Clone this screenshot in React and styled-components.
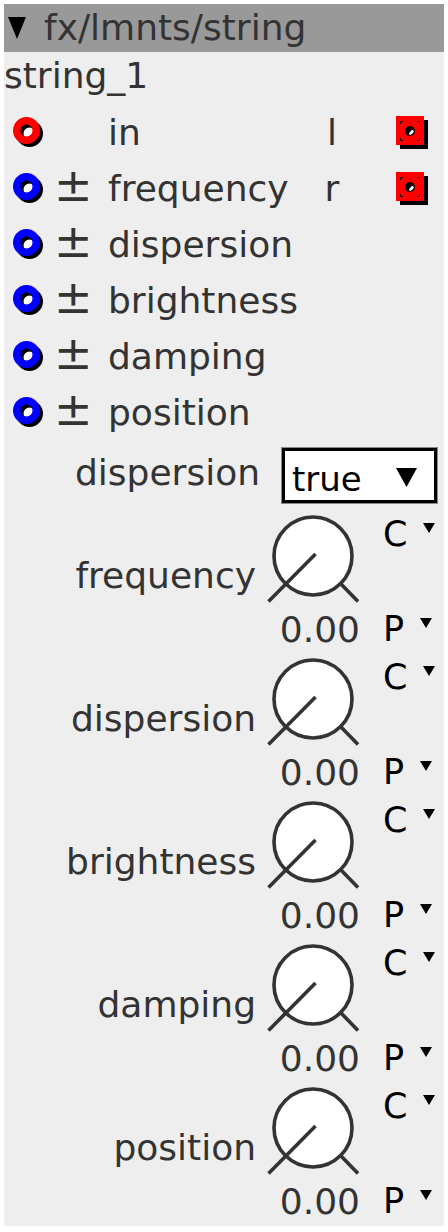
import React from "react";
import styled, { createGlobalStyle } from "styled-components";

const Global = createGlobalStyle`
  body {
    margin: 0;
    background: #fff;
  }
`;

const Panel = styled.div`
  margin: 4px;
  width: 440px;
  background: #eee;
  font-family: "DejaVu Sans", "Noto Sans", sans-serif;
  font-size: 36px;
  color: #333;
  padding-bottom: 4px;
`;

const Header = styled.div`
  height: 48px;
  line-height: 48px;
  background: #999;
  display: flex;
  align-items: center;
  padding-left: 4px;
  white-space: nowrap;
`;

const HeaderCaret = styled.svg`
  width: 18px;
  height: 22px;
  margin-right: 18px;
  flex: none;
`;

const Name = styled.div`
  height: 53px;
  line-height: 48px;
`;

const PortRow = styled.div`
  display: grid;
  grid-template-columns: 45px 50px 192px 64px 1fr;
  align-items: center;
  height: 56px;
  line-height: 56px;
  padding-left: 9px;
`;

const Sign = styled.span`
  margin-left: -4px;
  font-size: 46px;
  line-height: 49px;
  padding-bottom: 7px;
`;

const OutLabel = styled.span`
  text-align: center;
`;

const OutCell = styled.div`
  display: flex;
  align-items: center;
  padding-left: 32px;
`;

const Jack = styled.svg`
  display: block;
  width: 32px;
  height: 32px;
`;

const OutJackSvg = styled.svg`
  display: block;
  width: 33px;
  height: 34px;
`;

const SelectRow = styled.div`
  display: grid;
  grid-template-columns: 262px 1fr;
  height: 55px;
  margin-top: 7px;
`;

const Label = styled.div`
  text-align: right;
  padding-right: ${(p) => p.right || 8}px;
  line-height: 41px;
  padding-top: ${(p) => p.top || 0}px;
  white-space: nowrap;
`;

const Select = styled.div`
  margin-left: 16px;
  width: 155px;
  height: 55px;
  box-sizing: border-box;
  background: #fff;
  border: 3px solid #000;
  box-shadow: 0 0 0 1px #888;
  display: flex;
  justify-content: space-between;
  align-items: flex-start;
  padding: 8px 17px 0 7px;
  color: #000;
  font-size: 34px;
  line-height: 41px;
`;

const SelectCaret = styled.svg`
  width: 21px;
  height: 19px;
  margin-top: 9px;
  flex: none;
`;

const Knobs = styled.div`
  display: flex;
  flex-direction: column;
  gap: 7px;
  margin-top: 11px;
`;

const KnobBlock = styled.div`
  display: grid;
  grid-template-columns: 262px 94px 84px;
  grid-template-rows: 95px 41px;
  grid-template-areas:
    "label knob ctl"
    "label value param";
`;

const KnobLabel = styled(Label)`
  grid-area: label;
  padding-top: 41px;
`;

const KnobSvg = styled.svg`
  grid-area: knob;
  display: block;
  width: 94px;
  height: 92px;
`;

const Value = styled.div`
  grid-area: value;
  text-align: right;
  line-height: 41px;
  white-space: nowrap;
`;

const Mode = styled.div`
  grid-area: ${(p) => p.area};
  display: flex;
  align-items: flex-start;
  padding-left: 23px;
  font-size: 35px;
  line-height: 41px;
  color: #000;
`;

const SmallCaret = styled.svg`
  width: 12px;
  height: 10px;
  margin-left: 16px;
  margin-top: 9px;
  flex: none;
`;

const InJack = ({ color }) => (
  <Jack viewBox="0 0 32 32">
    <circle cx="16.5" cy="16.5" r="9.75" fill="#fff" stroke="#000" strokeWidth="7.5" />
    <circle cx="13.5" cy="13.5" r="9.75" fill="none" stroke={color} strokeWidth="7.5" />
  </Jack>
);

const OutJack = () => (
  <OutJackSvg viewBox="0 0 33 34">
    <rect x="4" y="4" width="28" height="29" fill="#000" />
    <rect x="0" y="0" width="28" height="29" fill="#f00" />
    <circle cx="14" cy="15" r="5" fill="#000" />
    <ellipse cx="15.5" cy="16.5" rx="3" ry="1.5" fill="#fff" transform="rotate(-45 15.5 16.5)" />
    <g stroke="#000" strokeWidth="1" fill="none">
      <path d="M4.5 8 V5.5 H7" />
      <path d="M21 5.5 H23.5 V8" />
      <path d="M4.5 22 V24.5 H7" />
      <path d="M21 24.5 H23.5 V22" />
    </g>
  </OutJackSvg>
);

const Caret = ({ as: Comp, w, h }) => (
  <Comp viewBox={`0 0 ${w} ${h}`}>
    <polygon points={`0,0 ${w},0 ${w / 2},${h}`} fill="#000" />
  </Comp>
);

const Knob = () => (
  <KnobSvg viewBox="0 0 94 92">
    <circle cx="47" cy="42" r="39" fill="#fff" stroke="#333" strokeWidth="3.6" />
    <line x1="49.5" y1="40" x2="2.5" y2="87.5" stroke="#333" strokeWidth="3.6" />
    <line x1="74.5" y1="69.5" x2="92" y2="87.5" stroke="#333" strokeWidth="3.6" />
  </KnobSvg>
);

const ports = [
  { name: "in", color: "#f00", sign: false, out: "l" },
  { name: "frequency", color: "#00f", sign: true, out: "r" },
  { name: "dispersion", color: "#00f", sign: true },
  { name: "brightness", color: "#00f", sign: true },
  { name: "damping", color: "#00f", sign: true },
  { name: "position", color: "#00f", sign: true },
];

const knobs = ["frequency", "dispersion", "brightness", "damping", "position"];

const App = () => {
  return (
    <>
      <Global />
      <Panel>
        <Header>
          <Caret as={HeaderCaret} w={18} h={22} />
          fx/lmnts/string
        </Header>
        <Name>string_1</Name>
        {ports.map((p) => (
          <PortRow key={p.name}>
            <InJack color={p.color} />
            <Sign>{p.sign ? "±" : ""}</Sign>
            <span>{p.name}</span>
            <OutLabel>{p.out || ""}</OutLabel>
            <OutCell>{p.out && <OutJack />}</OutCell>
          </PortRow>
        ))}
        <SelectRow>
          <Label top={4} right={6}>dispersion</Label>
          <Select>
            <span>true</span>
            <Caret as={SelectCaret} w={21} h={19} />
          </Select>
        </SelectRow>
        <Knobs>
          {knobs.map((k) => (
            <KnobBlock key={k}>
              <KnobLabel right={10}>{k}</KnobLabel>
              <Knob />
              <Value>0.00</Value>
              <Mode area="ctl">
                C
                <Caret as={SmallCaret} w={12} h={10} />
              </Mode>
              <Mode area="param">
                P
                <Caret as={SmallCaret} w={12} h={10} />
              </Mode>
            </KnobBlock>
          ))}
        </Knobs>
      </Panel>
    </>
  );
};

export default App;
